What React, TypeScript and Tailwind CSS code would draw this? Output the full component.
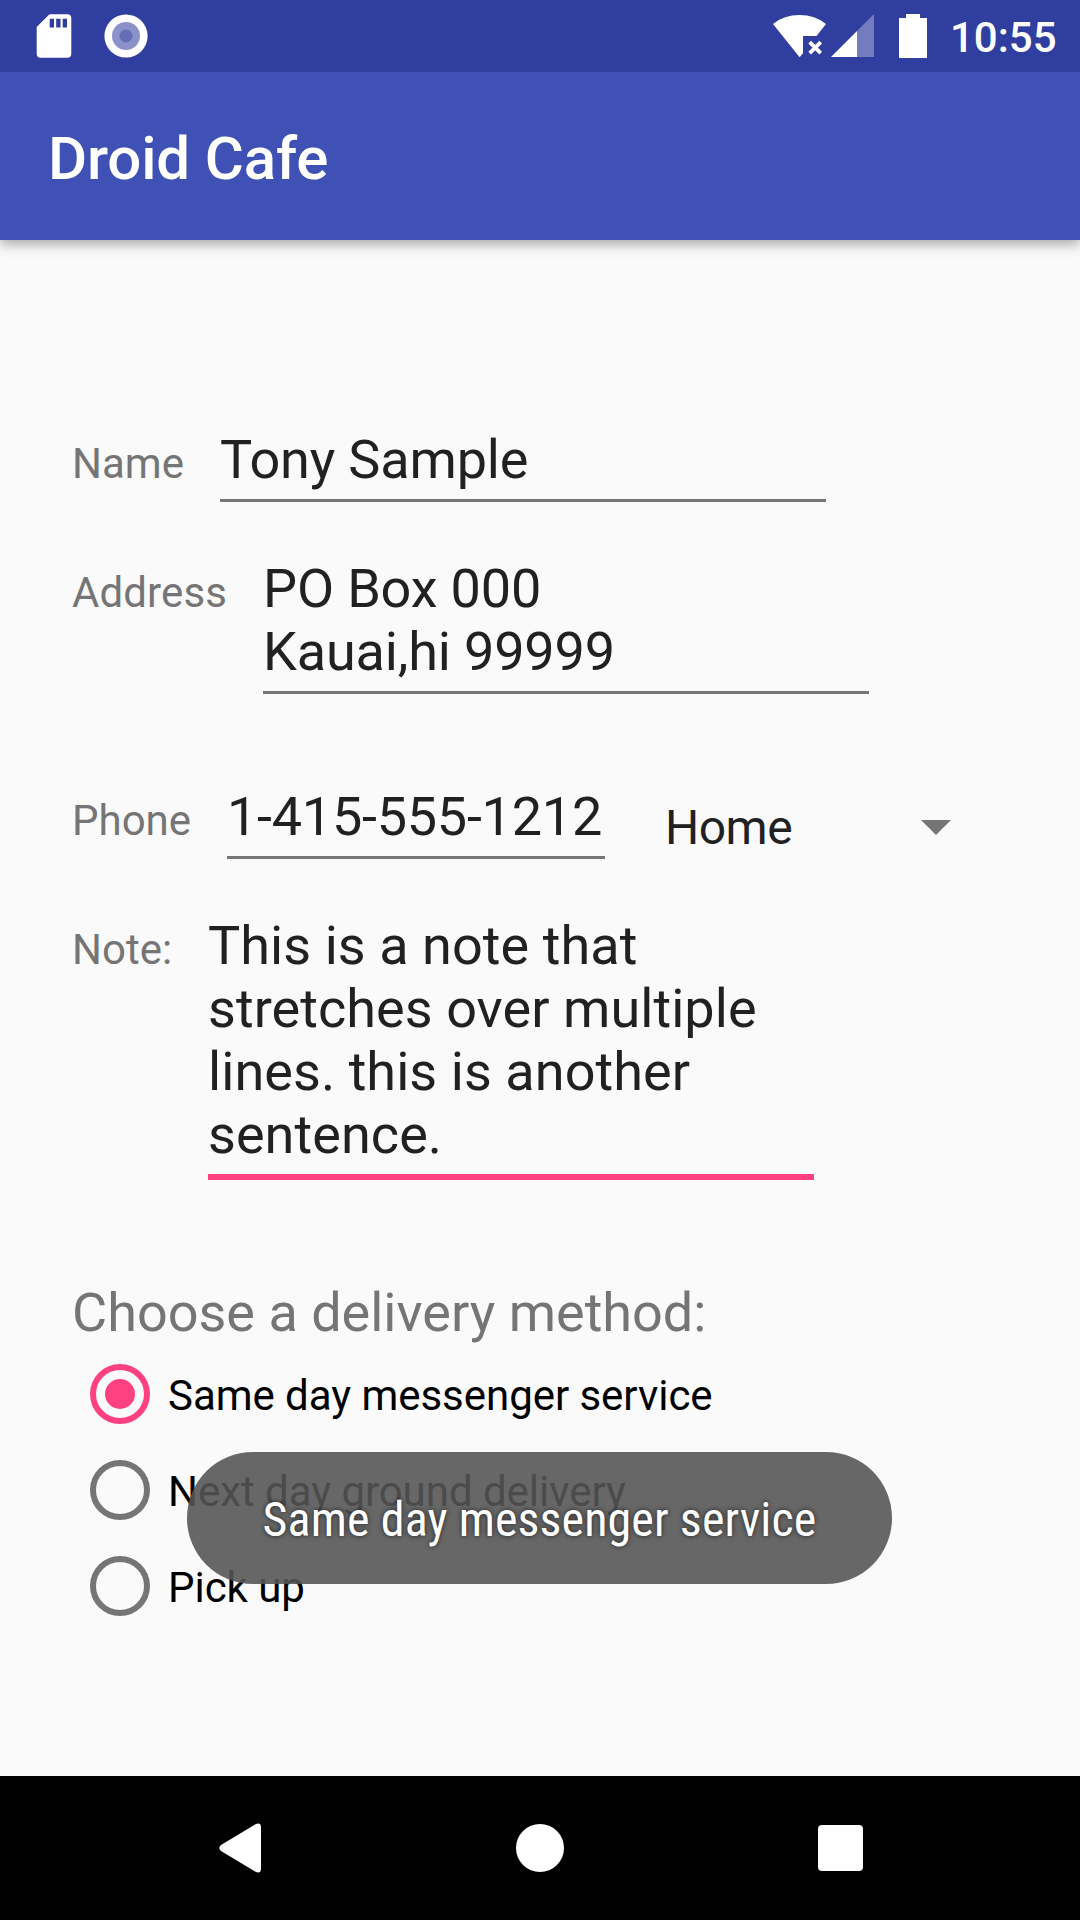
import type { ReactNode } from "react";

function StatusBar() {
  return (
    <div className="relative z-10 flex h-[72px] items-center justify-between bg-[#303f9f] text-white">
      <svg width="160" height="72" viewBox="0 0 160 72">
        <path
          fill="#fff"
          fillRule="evenodd"
          d="M49.500 14.300H67.300A4 4 0 0 1 71.300 18.300V53.700A4 4 0 0 1 67.300 57.700H40.700A4 4 0 0 1 36.700 53.700V27ZM49.700 18.800V27.500H54V18.800ZM56.200 18.800V27.500H60.500V18.800ZM62.700 18.800V27.500H67V18.800Z"
        />
        <circle cx="126" cy="36" r="21.6" fill="#fff" />
        <circle cx="126" cy="36" r="14" fill="#8a92c9" />
        <circle cx="126" cy="36" r="6.5" fill="#646db5" />
      </svg>
      <div className="flex items-center">
        <svg width="190" height="72" viewBox="760 0 190 72" fill="#fff">
          <path d="M773 23.900Q784 15 799.500 15T826 23.900L816.500 36H803V53.300L799.600 57.300Z" />
          <path d="M809.700 42.200L820.700 53.200M820.700 42.200L809.700 53.200" stroke="#fff" strokeWidth="3.800" />
          <path d="M831 57L857 31V57Z" />
          <path d="M857 31L874 14V57H857Z" fillOpacity="0.32" />
          <path d="M906 14H920V18H927V58H899V18H906Z" />
        </svg>
        <span className="mr-[25px] w-[105px] pt-[2px] text-right text-[42px] leading-[49px] font-medium">10:55</span>
      </div>
    </div>
  );
}

function Field({
  label,
  labelClass,
  fieldClass,
  children,
}: {
  label: string;
  labelClass: string;
  fieldClass: string;
  children: ReactNode;
}) {
  return (
    <div className="flex items-baseline">
      <label className={`${labelClass} shrink-0 text-[42px] leading-[49px] whitespace-nowrap text-[#757575]`}>
        {label}
      </label>
      <div className={`${fieldClass} shrink-0 pb-2 text-[54px] leading-[63px] whitespace-nowrap text-[#212121]`}>
        {children}
      </div>
    </div>
  );
}

function RadioOption({ label, checked = false }: { label: string; checked?: boolean }) {
  return (
    <div className="flex h-24 items-center pl-[18px]">
      <span
        className={`flex size-[60px] items-center justify-center rounded-full border-[6px] ${
          checked ? "border-[#ff4081]" : "border-[#757575]"
        }`}
      >
        {checked && <span className="size-[30px] rounded-full bg-[#ff4081]" />}
      </span>
      <span className="ml-[18px] pt-[3px] text-[42px] leading-[49px] tracking-[-0.04px] text-black">{label}</span>
    </div>
  );
}

function Toast() {
  return (
    <div className="absolute top-[1452px] left-[187px] flex h-[132px] w-[705px] items-center justify-center rounded-full bg-[rgba(84,84,84,0.89)]">
      <span className="pt-[3px] text-[48px] leading-[56px] tracking-[0.12px] whitespace-nowrap text-white [font-family:'Roboto_Condensed',Roboto,sans-serif] [font-stretch:75%] [text-shadow:0_0_5px_rgba(0,0,0,0.7)]">
        Same day messenger service
      </span>
    </div>
  );
}

function NavBar() {
  return (
    <div className="flex h-36 items-center justify-between bg-black px-[204px]">
      <svg width="72" height="72" viewBox="204 1812 72 72" fill="#fff">
        <path d="M255.500 1824.300Q261 1822 261 1827.500V1868.500Q261 1874 255.500 1871.700L221 1851Q217.600 1848 221 1845Z" />
      </svg>
      <span className="size-12 rounded-full bg-white" />
      <span className="flex size-[72px] items-center justify-center">
        <span className="h-[46px] w-[45px] rounded-[4px] bg-white" />
      </span>
    </div>
  );
}

export default function App() {
  return (
    <div className="relative flex h-[1920px] w-[1080px] flex-col overflow-hidden bg-[#fafafa] [font-family:Roboto,sans-serif]">
      <StatusBar />
      <header className="flex h-[168px] items-center bg-[#3f51b5] pl-12 shadow-[0_4px_12px_rgba(0,0,0,0.35)]">
        <h1 className="pt-[5px] text-[60px] leading-[70px] font-medium tracking-[-0.15px] text-white">Droid Cafe</h1>
      </header>

      <main className="flex flex-1 flex-col px-[72px] pt-[188px]">
        <Field
          label="Name"
          labelClass="w-[148px]"
          fieldClass="w-[606px] border-b-[3px] border-[#757575] tracking-[-0.16px]"
        >
          Tony Sample
        </Field>
        <div className="mt-[55px]">
          <Field
            label="Address"
            labelClass="w-[191px] tracking-[0.1px]"
            fieldClass="w-[606px] border-b-[3px] border-[#757575] tracking-[-0.16px]"
          >
            PO Box 000
            <br />
            Kauai,hi 99999
          </Field>
        </div>
        <div className="mt-[91px] flex items-baseline">
          <Field
            label="Phone"
            labelClass="w-[155px]"
            fieldClass="w-[378px] border-b-[3px] border-[#757575] tracking-[-0.26px]"
          >
            1-415-555-1212
          </Field>
          <div className="ml-[60px] flex w-[286px] translate-y-[9px] items-center justify-between text-[#212121]">
            <span className="text-[48px] leading-[56px] tracking-[-0.5px]">Home</span>
            <svg width="30" height="17" viewBox="0 0 30 17">
              <path d="M0 0H30L15 15Z" fill="#757575" />
            </svg>
          </div>
        </div>
        <div className="mt-[55px]">
          <Field
            label="Note:"
            labelClass="w-[136px]"
            fieldClass="w-[606px] border-b-[6px] border-[#ff4081] tracking-[0.06px]"
          >
            This is a note that
            <br />
            stretches over multiple
            <br />
            lines. this is another
            <br />
            sentence.
          </Field>
        </div>

        <h2 className="mt-[101px] text-[54px] leading-[63px] text-[#757575]">Choose a delivery method:</h2>
        <div className="mt-[2px] flex flex-col">
          <RadioOption label="Same day messenger service" checked />
          <RadioOption label="Next day ground delivery" />
          <RadioOption label="Pick up" />
        </div>
      </main>

      <NavBar />
      <Toast />
    </div>
  );
}
